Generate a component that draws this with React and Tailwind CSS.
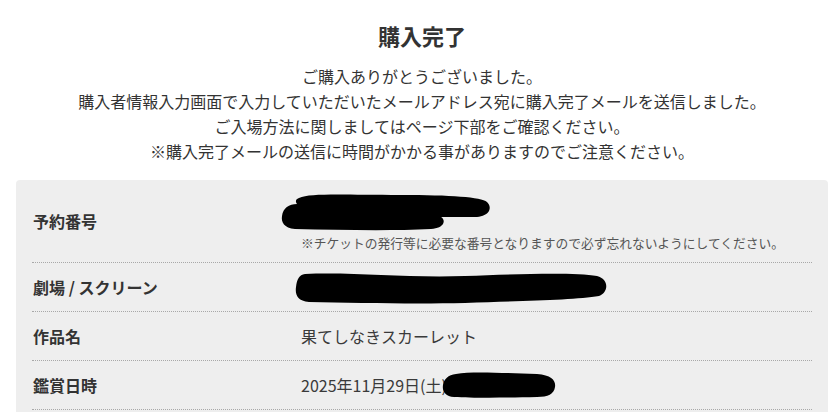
import React from "react";

const font = { fontFamily: '"Noto Sans CJK JP", "Noto Sans", sans-serif' };

function Blob1() {
  return (
    <svg width="212" height="40" viewBox="0 0 212 40" className="block -ml-[20px]">
      <path d="M18 6 C30 1 60 3 120 3 C170 3 200 5 206 10 C212 16 208 24 196 25 L160 25 C165 28 164 36 150 37 C110 39 60 38 14 37 C3 36 0 30 1 24 C2 16 8 12 16 12 C14 9 15 7 18 6 Z" fill="#000" />
    </svg>
  );
}

function Blob2() {
  return (
    <svg width="314" height="36" viewBox="0 0 314 36" className="block -ml-[6px]">
      <path d="M10 4 C60 2 110 8 170 6 C220 4 280 2 302 6 C314 9 314 22 304 26 C280 30 230 31 170 33 C120 34 60 33 14 32 C2 31 0 24 1 17 C2 9 4 5 10 4 Z" fill="#000" />
    </svg>
  );
}

function Blob3() {
  return (
    <svg width="115" height="28" viewBox="0 0 115 28" className="block -ml-[5px]">
      <path d="M14 3 C30 0 60 2 95 3 C110 4 114 10 113 16 C112 23 106 26 95 26 C60 27 30 27 12 26 C3 25 0 20 1 14 C2 8 6 4 14 3 Z" fill="#000" />
    </svg>
  );
}

function Row({ label, children, className = "" }) {
  return (
    <div className={`flex items-center border-b border-dotted border-[#a8a8a8] ${className}`}>
      <div className="w-[269px] shrink-0 pl-[1px] text-[16px] font-bold leading-[24px] text-[#333]">{label}</div>
      <div className="flex-1 text-[16px] leading-[24px] text-[#3a3a3a]">{children}</div>
    </div>
  );
}

export default function App() {
  return (
    <div className="min-h-[412px] bg-white pt-[20px]" style={font}>
      <div className="ml-[16px] mr-[1px]">
        <h1 className="text-center text-[22px] font-bold leading-[30px] text-[#333]">購入完了</h1>
        <div className="mt-[14px] text-center text-[16px] leading-[25px] text-[#333]">
          <p>ご購入ありがとうございました。</p>
          <p>購入者情報入力画面で入力していただいたメールアドレス宛に購入完了メールを送信しました。</p>
          <p>ご入場方法に関しましてはページ下部をご確認ください。</p>
          <p>※購入完了メールの送信に時間がかかる事がありますのでご注意ください。</p>
        </div>
        <div className="mt-[16px] rounded-t-[4px] bg-[#eeeeee] px-[16px] pb-[4px]">
          <Row label="予約番号" className="h-[83px]">
            <div className="flex flex-col">
              <div className="pt-[2px]">
                <Blob1 />
              </div>
              <div className="mt-[2px] text-[12.75px] leading-[18px] text-[#555]">
                ※チケットの発行等に必要な番号となりますので必ず忘れないようにしてください。
              </div>
            </div>
          </Row>
          <Row label="劇場 / スクリーン" className="h-[49px]">
            <div className="flex items-center pt-[2px]">
              <Blob2 />
            </div>
          </Row>
          <Row label="作品名" className="h-[49px]">
            果てしなきスカーレット
          </Row>
          <Row label="鑑賞日時" className="h-[49px]">
            <div className="flex items-center">
              <span>2025年11月29日(土)</span>
              <Blob3 />
            </div>
          </Row>
        </div>
      </div>
    </div>
  );
}
